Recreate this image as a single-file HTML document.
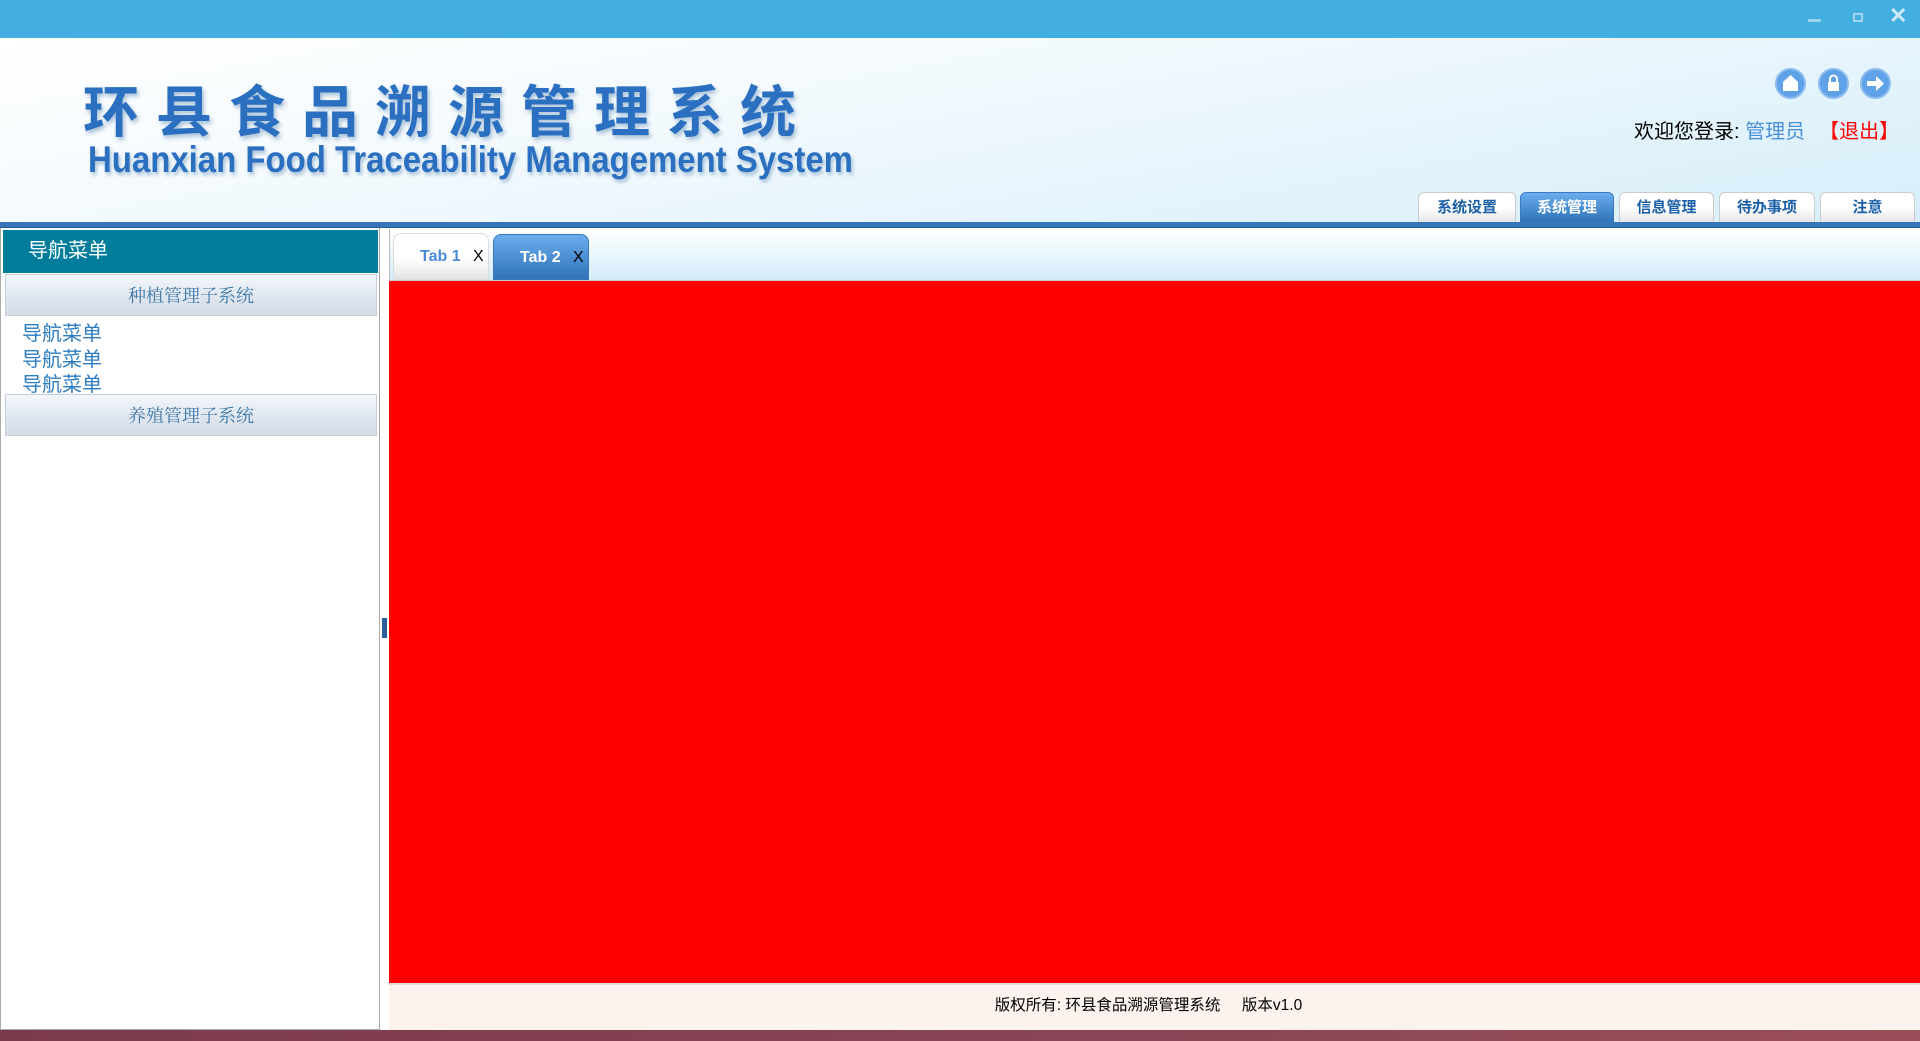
<!DOCTYPE html>
<html><head><meta charset="utf-8"><style>
*{margin:0;padding:0;box-sizing:border-box}
body{width:1920px;height:1041px;overflow:hidden;position:relative;background:#fff;font-family:"Liberation Sans","Noto Sans CJK SC",sans-serif}
.a{position:absolute}
.ttab{position:absolute;top:192px;height:30px;border:1px solid #ccc;border-bottom:none;border-radius:6px 6px 0 0;background:linear-gradient(#fff 50%,#e6e6e6);color:#1a5fa8;font-weight:bold;font-size:15px;text-align:center;line-height:30px}
.ttab.on{background:linear-gradient(#6aaeee,#2f72b8);color:#fff;border-color:#3b7ac0}
.acc{position:absolute;left:5px;width:372px;height:42px;background:linear-gradient(#f4f7fc,#dfe6ef 55%,#d5dde8);border:1px solid #c5d0dc;color:#3f78a8;font-family:"Liberation Serif","Noto Serif CJK SC",serif;font-size:18px;text-align:center;line-height:42px}
.item{position:absolute;left:22px;color:#2c7cc0;font-size:20px}
.ic{position:absolute;top:68px;width:31px;height:31px;border-radius:50%;background:#5fa2e8;border:2px solid #8cbcf0}
</style></head><body>
<div class="a" style="left:0;top:0;width:1920px;height:38px;background:#42afe0"></div>
<div class="a" style="left:1808px;top:19px;width:13px;height:3px;background:#9fd4ee"></div>
<div class="a" style="left:1853px;top:13px;width:10px;height:9px;border:2px solid #9fd4ee"></div>
<div class="a" style="left:1889px;top:3px;color:#cfeaf7;font-size:22px;font-weight:bold">✕</div>
<div class="a" style="left:0;top:38px;width:1920px;height:186px;background:linear-gradient(170deg,#fff 0%,#f2f9fd 40%,#d6eefa 100%)"></div>
<div class="a" style="left:83px;top:74px;font-size:56px;font-weight:bold;color:#2a6fc0;letter-spacing:17px;font-family:'Noto Sans CJK SC',sans-serif;text-shadow:2px 3px 4px #a9c2d8;white-space:nowrap;line-height:70px">环县食品溯源管理系统</div>
<div class="a" style="left:88px;top:137px;font-size:37px;font-weight:bold;color:#2a6fc0;white-space:nowrap;transform:scaleX(0.89);transform-origin:0 0;text-shadow:2px 3px 4px #a9c2d8;line-height:46px">Huanxian Food Traceability Management System</div>
<div class="ic" style="left:1775px"><svg width="27" height="27" viewBox="0 0 27 27"><path d="M13.5 5 L21 12 V21 H6 V12 Z" fill="#fff"/></svg></div>
<div class="ic" style="left:1818px"><svg width="27" height="27" viewBox="0 0 27 27"><rect x="8" y="12" width="11" height="9" fill="#fff"/><path d="M10 12 V9 a3.5 3.5 0 0 1 7 0 V12" stroke="#fff" stroke-width="2" fill="none"/></svg></div>
<div class="ic" style="left:1860px"><svg width="27" height="27" viewBox="0 0 27 27"><path d="M5 11 H14 V6 L22 13.5 L14 21 V16 H5 Z" fill="#fff"/></svg></div>
<div class="a" style="left:1634px;top:115px;font-size:20px;white-space:nowrap">欢迎您登录: <span style="color:#4a90d8">管理员</span><span style="color:#f00;margin-left:14px">【退出】</span></div>
<div class="ttab" style="left:1418px;width:98px">系统设置</div>
<div class="ttab on" style="left:1520px;width:94px">系统管理</div>
<div class="ttab" style="left:1619px;width:95px">信息管理</div>
<div class="ttab" style="left:1719px;width:96px">待办事项</div>
<div class="ttab" style="left:1820px;width:95px">注意</div>
<div class="a" style="left:0;top:222px;width:1920px;height:6px;background:#3675b8;border-bottom:1px solid #2a5f98"></div>
<div class="a" style="left:0;top:228px;width:380px;height:802px;border:1px solid #aaa;border-top:none;background:#fff"></div>
<div class="a" style="left:3px;top:230px;width:375px;height:43px;background:#017d9c;color:#fff;font-size:20px;line-height:43px;padding-left:25px">导航菜单</div>
<div class="acc" style="top:274px">种植管理子系统</div>
<div class="item" style="top:317px">导航菜单</div>
<div class="item" style="top:343px">导航菜单</div>
<div class="item" style="top:368px">导航菜单</div>
<div class="acc" style="top:394px">养殖管理子系统</div>
<div class="a" style="left:382px;top:618px;width:5px;height:20px;background:#2a5f98"></div>
<div class="a" style="left:389px;top:229px;width:1531px;height:51px;background:linear-gradient(#fff,#d3ecfa);border-left:1px solid #bbb"></div>
<div class="a" style="left:393px;top:233px;width:96px;height:47px;border:1px solid #ddd;border-radius:8px 8px 0 0;background:linear-gradient(#fff 55%,#e4e4e4);font-weight:bold;font-size:16px;line-height:46px;padding-left:26px;color:#4a8ad8">Tab 1 <span style="color:#000;font-weight:normal;margin-left:8px">X</span></div>
<div class="a" style="left:493px;top:234px;width:96px;height:46px;border:1px solid #3a78c0;border-radius:8px 8px 0 0;background:linear-gradient(#6aaeee,#2f72b8);font-weight:bold;font-size:16px;line-height:46px;padding-left:26px;color:#fff">Tab 2 <span style="color:#000;font-weight:normal;margin-left:8px">X</span></div>
<div class="a" style="left:389px;top:280px;width:1531px;height:703px;background:#f00;border-top:1px solid #ccc"></div>
<div class="a" style="left:389px;top:983px;width:1531px;height:47px;background:#fdf3ee;border-top:2px solid #ddd;text-align:center;font-size:15.5px;line-height:42px;padding-right:12px">版权所有: 环县食品溯源管理系统 &nbsp;&nbsp;&nbsp;&nbsp;版本v1.0</div>
<div class="a" style="left:0;top:1030px;width:1920px;height:11px;background:linear-gradient(90deg,#7b3a4a,#8a4656 60%,#9a4e58)"></div>
</body></html>
